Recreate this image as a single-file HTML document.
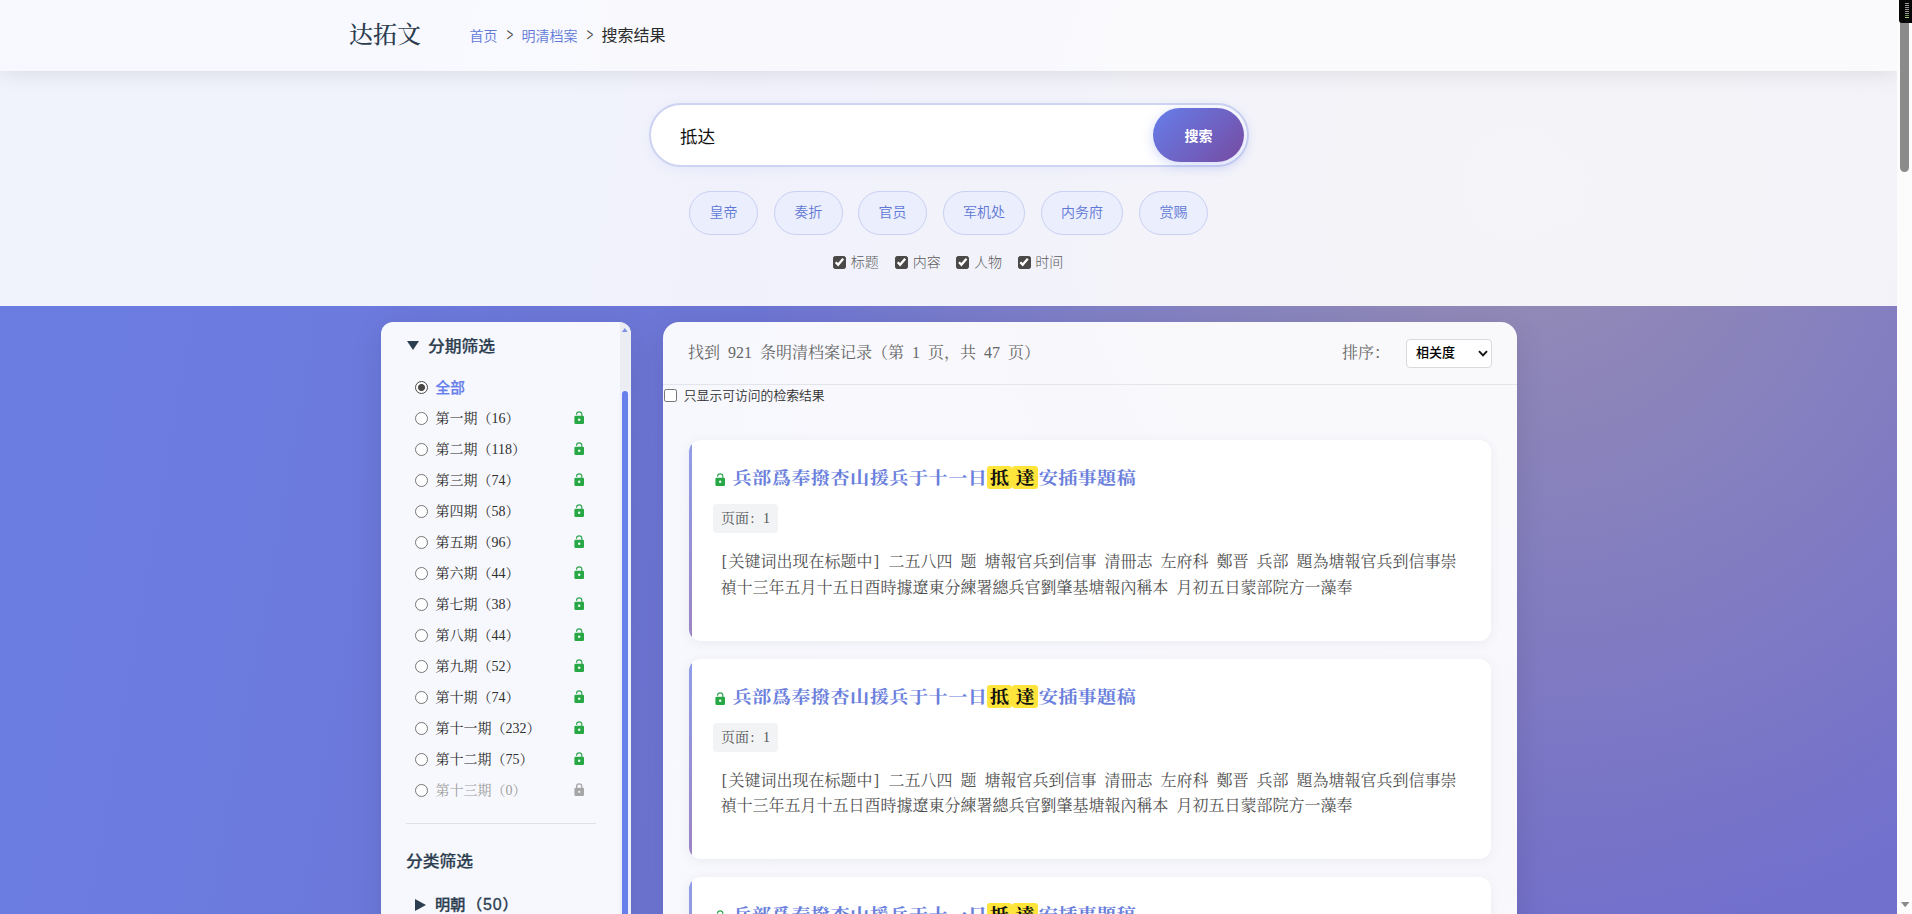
<!DOCTYPE html>
<html lang="zh-CN">
<head>
<meta charset="utf-8">
<title>搜索结果 - 明清档案 - 达拓文</title>
<style>
*{box-sizing:border-box;margin:0;padding:0}
html,body{width:1912px;height:914px;overflow:hidden;background:#fff}
body{font-family:"Liberation Sans","Noto Sans CJK SC",sans-serif;font-size:16px;color:#333;position:relative}
.serif{font-family:"Liberation Serif","Noto Serif CJK SC",serif}
#page{position:absolute;left:0;top:0;width:1897px;height:914px;overflow:hidden;
 background:
  radial-gradient(circle at 1518px 183px,rgba(240,212,122,.30) 0px,rgba(240,212,122,0) 770px),
  linear-gradient(100deg,#6b7de2 0%,#6c7add 20%,#6d76d5 36%,#716fcb 80%,#7170cd 100%)}
#lite{position:absolute;left:0;top:0;width:1897px;height:306px;background:rgba(255,255,255,.9)}

/* ---------- header ---------- */
#hdr{position:absolute;left:0;top:0;width:1897px;height:71px;background:rgba(255,255,255,.55);
 box-shadow:0 2px 20px rgba(0,0,0,.1);z-index:5}
#logo{position:absolute;left:349px;top:17px;font-family:"Liberation Serif","Noto Serif CJK SC",serif;font-size:24px;line-height:36px;color:#2c3e50;font-weight:500;white-space:nowrap}
#crumb{position:absolute;left:469.5px;top:23px;height:24px;line-height:24px;white-space:nowrap;font-size:14px;color:#666}
#crumb a{color:#5f78d8;text-decoration:none;font-weight:350}
#crumb .sep{display:inline-block;margin:0 8px;color:#555;font-family:"Noto Sans CJK SC",sans-serif;font-weight:300;font-size:15px;width:8px;text-align:center;transform:scale(.8,1.5);transform-origin:50% 56%;color:#444;position:relative;left:.5px}
#crumb .cur{font-size:16px;color:#2b2b2b;font-weight:400}

/* ---------- search ---------- */
#sbox{position:absolute;left:649px;top:103px;width:600px;height:64px;border:2px solid #cdd3f1;border-radius:32px;background:#fff;
 box-shadow:0 3px 12px rgba(102,126,234,.07)}
#sbox .q{position:absolute;left:29px;top:15.5px;font-size:17.6px;line-height:32px;color:#111;font-weight:400}
#sbtn{position:absolute;left:502px;top:3px;width:91px;height:54px;border-radius:27px;background:linear-gradient(135deg,#667eea 0%,#764ba2 100%);
 color:#fff;font-size:14px;font-weight:700;text-align:center;line-height:56px;box-shadow:0 3px 12px rgba(102,126,234,.3)}
#tags{position:absolute;left:0;top:191px;white-space:nowrap;font-size:0}
.tag{position:absolute;top:0;height:44px;line-height:40px;text-align:center;border:1px solid #c9d0f3;border-radius:22px;
 background:#ebeefc;color:#5f78d6;font-size:14px;font-weight:350}
#opts{position:absolute;left:0;top:252px;height:21px;line-height:21px;white-space:nowrap;font-size:14px;color:#5c5c5c}
#opts label{position:absolute;top:0;font-weight:300;height:21px;white-space:nowrap}
input[type=checkbox],input[type=radio]{-webkit-appearance:none;appearance:none;width:13px;height:13px;margin:0;vertical-align:top;background:#fff;border:1px solid #767676;position:relative;display:inline-block}
input[type=checkbox]{border-radius:2.2px}
input[type=checkbox]:checked{background:#4b4947;border-color:#4b4947}
input[type=checkbox]:checked::after{content:"";position:absolute;left:0;top:-.6px;width:11px;height:11px;background:#fff;clip-path:polygon(0.87px 6.70px,4.15px 10.11px,10.08px 3.14px,8.32px 1.66px,4.05px 6.69px,2.53px 5.10px)}
input[type=radio]{border-radius:50%}
input[type=radio]:checked{border:1.2px solid #4b4947;background:radial-gradient(circle at 50% 50%,#4b4947 0,#4b4947 3.1px,#fff 3.9px)}
#opts input{margin:4px 4.7px 0 0}

/* ---------- main ---------- */
#main{position:absolute;left:0;top:306px;width:1897px;height:608px;overflow:hidden}
#side{position:absolute;left:381px;top:16px;width:250px;height:640px;border-radius:12px;background:rgba(255,255,255,.95);overflow:hidden;
 box-shadow:0 8px 32px rgba(0,0,0,.1)}
#res{position:absolute;left:663px;top:16px;width:854px;height:640px;border-radius:16px;background:rgba(255,255,255,.95);overflow:hidden;
 box-shadow:0 8px 32px rgba(0,0,0,.1)}

/* ---------- sidebar ---------- */
#side .ttl{position:absolute;left:47px;top:12px;font-family:"Liberation Sans","Noto Sans CJK SC",sans-serif;font-weight:500;-webkit-text-stroke:.25px #2c3e50;font-size:16.8px;line-height:26px;color:#2c3e50;white-space:nowrap}
#side .tri{position:absolute;left:26px;top:19px;width:12px;height:9px}
.sq{display:inline-block;transform:scaleY(.92);transform-origin:50% 70%}
.row{position:absolute;left:25px;width:190px;height:31px;white-space:nowrap;font-family:"Liberation Serif","Noto Serif CJK SC",serif;font-size:14px;line-height:31px;color:#2f2f2f}
.row input{position:absolute;left:9px;top:9px}
.row .t{position:absolute;left:29.5px;top:0}
.row .lk{position:absolute;left:165.7px;top:8.4px;width:14.4px;height:14.4px}
.row.on .t{top:.5px;color:#667eea;font-weight:500;-webkit-text-stroke:.25px #667eea;font-family:"Liberation Sans","Noto Sans CJK SC",sans-serif;font-size:14.7px}
.row.off{color:#9e9e9e}
#side .hr{position:absolute;left:25px;top:501px;width:190px;height:1px;background:#dfe1e6}
#side .ttl2{position:absolute;left:25px;top:526.5px;font-family:"Liberation Sans","Noto Sans CJK SC",sans-serif;font-weight:500;-webkit-text-stroke:.25px #2c3e50;font-size:16.8px;line-height:26px;color:#2c3e50;white-space:nowrap}
#side .cat{position:absolute;left:54px;top:571px;font-family:"Liberation Sans","Noto Sans CJK SC",sans-serif;font-weight:500;-webkit-text-stroke:.3px #2c3e50;font-size:15.2px;line-height:24px;color:#2c3e50;white-space:nowrap}
#side .tri2{position:absolute;left:34px;top:577px;width:11px;height:12px}
#side .sbt{position:absolute;left:239px;top:0;width:11px;height:640px;background:#ecedf2}
#side .sbh{position:absolute;left:241.2px;top:69px;width:5.6px;height:700px;border-radius:3px;background:#677fea;box-shadow:0 0 0 2.3px #edf0fc}
#side .sba{position:absolute;left:241.3px;top:5.5px;width:5.6px;height:4px;opacity:.85}

/* ---------- results ---------- */
#res .hd{position:absolute;left:25px;top:18px;font-family:"Liberation Serif","Noto Serif CJK SC",serif;font-size:16px;line-height:26px;color:#666;white-space:nowrap;word-spacing:4px}
#res .sl{position:absolute;left:679px;top:18px;font-family:"Liberation Serif","Noto Serif CJK SC",serif;font-size:16px;line-height:26px;color:#666;white-space:nowrap}
#res .sel{position:absolute;left:743px;top:17.3px;width:86px;height:28.3px;border:1px solid #d9d9de;border-radius:4px;background:#fff;
 font-size:13px;font-weight:500;color:#000;line-height:26px;padding-left:9px;white-space:nowrap}
#res .sel svg{position:absolute;left:71px;top:9.5px;width:10px;height:7px}
#res .hl{position:absolute;left:0;top:62px;width:854px;height:1px;background:#e3e5eb}
#res .only{position:absolute;left:1.3px;top:63px;height:21px;line-height:21px;font-size:12.8px;color:#2e2e2e;white-space:nowrap;font-weight:350}
#res .only input{margin:4px 6.5px 0 0}
.card{position:absolute;left:26px;width:802px;height:200.7px;border-radius:12px;background:#fff;overflow:hidden;box-shadow:0 2px 12px rgba(60,60,120,.07)}
.card:before{content:"";position:absolute;left:0;top:0;width:3px;height:100%;background:linear-gradient(180deg,#8f9ee9 0%,#9b83c2 100%)}
.card .lk{position:absolute;left:23.8px;top:33.1px;width:14.4px;height:14.4px}
.card .tt{position:absolute;left:43.4px;top:22px;font-family:"Liberation Serif","Noto Serif CJK SC",serif;font-weight:700;font-size:19.2px;line-height:32px;color:#6b7fdc;white-space:nowrap;letter-spacing:.25px}
.card mark{display:inline-block;height:23px;line-height:23px;padding:0 3.2px;border-radius:3px;background:#ffe53b;color:#111;vertical-align:top;margin-top:4px;letter-spacing:0}
.card .tt .s{display:inline-block;transform:scaleY(.87);transform-origin:50% 75%}
.card mark .s{transform-origin:50% 83%!important}
.card mark.f{margin-left:-.8px}
.card mark.l{margin-right:1px}
.card .pg{position:absolute;left:24px;top:64px;width:65px;height:29px;border-radius:4px;background:#f1f3f5;font-family:"Liberation Serif","Noto Serif CJK SC",serif;
 font-size:14px;line-height:29px;color:#555;padding-left:8px;white-space:nowrap;word-spacing:3.5px}
.card .pg i{font-style:normal;display:inline-block;width:7px;text-align:center}
.card .ex{position:absolute;left:31.5px;top:109.2px;font-family:"Liberation Serif","Noto Serif CJK SC",serif;font-size:16px;line-height:25.6px;color:#4f4f4f;white-space:nowrap;word-spacing:4px}
.card .ex i{font-style:normal;display:inline-block;width:8px;text-align:center}

/* ---------- page scrollbar ---------- */
#vs{position:absolute;left:1897px;top:0;width:15px;height:914px;background:#fcfcfc}
#vs .th{position:absolute;left:3px;top:4px;width:9px;height:168px;border-radius:4.5px;background:#8b8b8b}
#vs .dn{position:absolute;left:3.6px;top:902.4px;width:8.4px;height:5.4px}
#vs .bx{position:absolute;left:2px;top:0;width:13px;height:23.3px;background:#070707;border-bottom-left-radius:3px}
#vs .bx i{position:absolute;left:6px;width:4px;height:1px;background:#9a9a9a}
#vs .bx i.g1{background:#6f9a5a}
#vs .bx i.g2{background:#9bd077}
</style>
</head>
<body>
<div id="page">
 <div id="lite"></div>
 <div id="hdr">
  <div id="logo">达拓文</div>
  <div id="crumb"><a>首页</a><span class="sep">&gt;</span><a>明清档案</a><span class="sep">&gt;</span><span class="cur">搜索结果</span></div>
 </div>

 <div id="sbox"><span class="q">抵达</span><div id="sbtn">搜索</div></div>
 <div id="tags"><span class="tag" style="left:689px;width:69px">皇帝</span><span class="tag" style="left:774px;width:68.5px">奏折</span><span class="tag" style="left:858px;width:69px">官员</span><span class="tag" style="left:943px;width:82px">军机处</span><span class="tag" style="left:1040.8px;width:82.2px">内务府</span><span class="tag" style="left:1138.7px;width:69.5px">赏赐</span></div>
 <div id="opts"><label style="left:833px"><input type="checkbox" checked>标题</label><label style="left:895px"><input type="checkbox" checked>内容</label><label style="left:956.3px"><input type="checkbox" checked>人物</label><label style="left:1017.6px"><input type="checkbox" checked>时间</label></div>

 <div id="main">
  <div id="side">
<svg class="tri" viewBox="0 0 12 9"><path d="M0 0H12L6 9Z" fill="#2c3e50"/></svg><div class="ttl"><span class="sq">分期筛选</span></div>
<div class="row on" style="top:50px"><input type="radio" name="p" checked><span class="t">全部</span></div>
<div class="row " style="top:81px"><input type="radio" name="p"><span class="t">第一期（16）</span><svg class="lk" viewBox="0 0 24 24"><rect x="4" y="8" width="16" height="13.6" rx="2" fill="#28a745"/><circle cx="12" cy="14.7" r="2" fill="#f0fff4"/><path d="M7.6 6.2V5.9a4.4 4.4 0 0 1 8.8 0V9" fill="none" stroke="#31a551" stroke-width="1.9"/></svg></div>
<div class="row " style="top:112px"><input type="radio" name="p"><span class="t">第二期（118）</span><svg class="lk" viewBox="0 0 24 24"><rect x="4" y="8" width="16" height="13.6" rx="2" fill="#28a745"/><circle cx="12" cy="14.7" r="2" fill="#f0fff4"/><path d="M7.6 6.2V5.9a4.4 4.4 0 0 1 8.8 0V9" fill="none" stroke="#31a551" stroke-width="1.9"/></svg></div>
<div class="row " style="top:143px"><input type="radio" name="p"><span class="t">第三期（74）</span><svg class="lk" viewBox="0 0 24 24"><rect x="4" y="8" width="16" height="13.6" rx="2" fill="#28a745"/><circle cx="12" cy="14.7" r="2" fill="#f0fff4"/><path d="M7.6 6.2V5.9a4.4 4.4 0 0 1 8.8 0V9" fill="none" stroke="#31a551" stroke-width="1.9"/></svg></div>
<div class="row " style="top:174px"><input type="radio" name="p"><span class="t">第四期（58）</span><svg class="lk" viewBox="0 0 24 24"><rect x="4" y="8" width="16" height="13.6" rx="2" fill="#28a745"/><circle cx="12" cy="14.7" r="2" fill="#f0fff4"/><path d="M7.6 6.2V5.9a4.4 4.4 0 0 1 8.8 0V9" fill="none" stroke="#31a551" stroke-width="1.9"/></svg></div>
<div class="row " style="top:205px"><input type="radio" name="p"><span class="t">第五期（96）</span><svg class="lk" viewBox="0 0 24 24"><rect x="4" y="8" width="16" height="13.6" rx="2" fill="#28a745"/><circle cx="12" cy="14.7" r="2" fill="#f0fff4"/><path d="M7.6 6.2V5.9a4.4 4.4 0 0 1 8.8 0V9" fill="none" stroke="#31a551" stroke-width="1.9"/></svg></div>
<div class="row " style="top:236px"><input type="radio" name="p"><span class="t">第六期（44）</span><svg class="lk" viewBox="0 0 24 24"><rect x="4" y="8" width="16" height="13.6" rx="2" fill="#28a745"/><circle cx="12" cy="14.7" r="2" fill="#f0fff4"/><path d="M7.6 6.2V5.9a4.4 4.4 0 0 1 8.8 0V9" fill="none" stroke="#31a551" stroke-width="1.9"/></svg></div>
<div class="row " style="top:267px"><input type="radio" name="p"><span class="t">第七期（38）</span><svg class="lk" viewBox="0 0 24 24"><rect x="4" y="8" width="16" height="13.6" rx="2" fill="#28a745"/><circle cx="12" cy="14.7" r="2" fill="#f0fff4"/><path d="M7.6 6.2V5.9a4.4 4.4 0 0 1 8.8 0V9" fill="none" stroke="#31a551" stroke-width="1.9"/></svg></div>
<div class="row " style="top:298px"><input type="radio" name="p"><span class="t">第八期（44）</span><svg class="lk" viewBox="0 0 24 24"><rect x="4" y="8" width="16" height="13.6" rx="2" fill="#28a745"/><circle cx="12" cy="14.7" r="2" fill="#f0fff4"/><path d="M7.6 6.2V5.9a4.4 4.4 0 0 1 8.8 0V9" fill="none" stroke="#31a551" stroke-width="1.9"/></svg></div>
<div class="row " style="top:329px"><input type="radio" name="p"><span class="t">第九期（52）</span><svg class="lk" viewBox="0 0 24 24"><rect x="4" y="8" width="16" height="13.6" rx="2" fill="#28a745"/><circle cx="12" cy="14.7" r="2" fill="#f0fff4"/><path d="M7.6 6.2V5.9a4.4 4.4 0 0 1 8.8 0V9" fill="none" stroke="#31a551" stroke-width="1.9"/></svg></div>
<div class="row " style="top:360px"><input type="radio" name="p"><span class="t">第十期（74）</span><svg class="lk" viewBox="0 0 24 24"><rect x="4" y="8" width="16" height="13.6" rx="2" fill="#28a745"/><circle cx="12" cy="14.7" r="2" fill="#f0fff4"/><path d="M7.6 6.2V5.9a4.4 4.4 0 0 1 8.8 0V9" fill="none" stroke="#31a551" stroke-width="1.9"/></svg></div>
<div class="row " style="top:391px"><input type="radio" name="p"><span class="t">第十一期（232）</span><svg class="lk" viewBox="0 0 24 24"><rect x="4" y="8" width="16" height="13.6" rx="2" fill="#28a745"/><circle cx="12" cy="14.7" r="2" fill="#f0fff4"/><path d="M7.6 6.2V5.9a4.4 4.4 0 0 1 8.8 0V9" fill="none" stroke="#31a551" stroke-width="1.9"/></svg></div>
<div class="row " style="top:422px"><input type="radio" name="p"><span class="t">第十二期（75）</span><svg class="lk" viewBox="0 0 24 24"><rect x="4" y="8" width="16" height="13.6" rx="2" fill="#28a745"/><circle cx="12" cy="14.7" r="2" fill="#f0fff4"/><path d="M7.6 6.2V5.9a4.4 4.4 0 0 1 8.8 0V9" fill="none" stroke="#31a551" stroke-width="1.9"/></svg></div>
<div class="row off" style="top:453px"><input type="radio" name="p"><span class="t">第十三期（0）</span><svg class="lk" viewBox="0 0 24 24"><rect x="4" y="8" width="16" height="13.6" rx="2" fill="#a6a6a6"/><circle cx="12" cy="14.7" r="1.9" fill="#f4f4f4"/><path d="M7.7 9V5.9a4.3 4.3 0 0 1 8.6 0V9" fill="none" stroke="#a6a6a6" stroke-width="2.1"/></svg></div>
<div class="hr"></div><div class="ttl2"><span class="sq">分类筛选</span></div><svg class="tri2" viewBox="0 0 11 12"><path d="M0 0L11 6L0 12Z" fill="#2c3e50"/></svg><div class="cat">明朝<span style="margin-left:1.5px">（</span><span style="letter-spacing:.8px;font-size:16px;margin-left:1px">50</span>）</div>
<div class="sbt"></div><div class="sbh"></div><svg class="sba" viewBox="0 0 7 5"><path d="M0 5L3.5 0L7 5Z" fill="#6a7fe6"/></svg>
</div>
  <div id="res">
<div class="hd">找到 921 条明清档案记录（第 1 页，共 47 页）</div>
<div class="sl">排序：</div>
<div class="sel">相关度<svg viewBox="0 0 10 7"><path d="M1 1.2L5 5.4L9 1.2" fill="none" stroke="#111" stroke-width="1.9"/></svg></div>
<div class="hl"></div>
<label class="only"><input type="checkbox">只显示可访问的检索结果</label>
<div class="card" style="top:118px"><svg class="lk" viewBox="0 0 24 24"><rect x="4" y="8" width="16" height="13.6" rx="2" fill="#28a745"/><circle cx="12" cy="14.7" r="2" fill="#f0fff4"/><path d="M7.6 6.2V5.9a4.4 4.4 0 0 1 8.8 0V9" fill="none" stroke="#31a551" stroke-width="1.9"/></svg><div class="tt"><span class="s" style="letter-spacing:.43px">兵部爲奉撥杏山援兵于十一日</span><mark class="f"><span class="s">抵</span></mark><mark class="l"><span class="s">達</span></mark><span class="s">安插事題稿</span></div>
<div class="pg">页面<i>:</i> 1</div>
<div class="ex"><i>[</i>关键词出现在标题中<i>]</i> 二五八四 题 塘報官兵到信事 清冊志 左府科 鄭晋 兵部 題為塘報官兵到信事崇<br>禎十三年五月十五日酉時據遼東分練署總兵官劉肇基塘報內稱本 月初五日蒙部院方一藻奉</div></div>
<div class="card" style="top:336.7px"><svg class="lk" viewBox="0 0 24 24"><rect x="4" y="8" width="16" height="13.6" rx="2" fill="#28a745"/><circle cx="12" cy="14.7" r="2" fill="#f0fff4"/><path d="M7.6 6.2V5.9a4.4 4.4 0 0 1 8.8 0V9" fill="none" stroke="#31a551" stroke-width="1.9"/></svg><div class="tt"><span class="s" style="letter-spacing:.43px">兵部爲奉撥杏山援兵于十一日</span><mark class="f"><span class="s">抵</span></mark><mark class="l"><span class="s">達</span></mark><span class="s">安插事題稿</span></div>
<div class="pg">页面<i>:</i> 1</div>
<div class="ex"><i>[</i>关键词出现在标题中<i>]</i> 二五八四 题 塘報官兵到信事 清冊志 左府科 鄭晋 兵部 題為塘報官兵到信事崇<br>禎十三年五月十五日酉時據遼東分練署總兵官劉肇基塘報內稱本 月初五日蒙部院方一藻奉</div></div>
<div class="card" style="top:555.2px"><svg class="lk" viewBox="0 0 24 24"><rect x="4" y="8" width="16" height="13.6" rx="2" fill="#28a745"/><circle cx="12" cy="14.7" r="2" fill="#f0fff4"/><path d="M7.6 6.2V5.9a4.4 4.4 0 0 1 8.8 0V9" fill="none" stroke="#31a551" stroke-width="1.9"/></svg><div class="tt"><span class="s" style="letter-spacing:.43px">兵部爲奉撥杏山援兵于十一日</span><mark class="f"><span class="s">抵</span></mark><mark class="l"><span class="s">達</span></mark><span class="s">安插事題稿</span></div>
<div class="pg">页面<i>:</i> 1</div>
<div class="ex"><i>[</i>关键词出现在标题中<i>]</i> 二五八四 题 塘報官兵到信事 清冊志 左府科 鄭晋 兵部 題為塘報官兵到信事崇<br>禎十三年五月十五日酉時據遼東分練署總兵官劉肇基塘報內稱本 月初五日蒙部院方一藻奉</div></div>

</div>
 </div>
</div>
<div id="vs"><div class="th"></div><svg class="dn" viewBox="0 0 8 5"><path d="M0 0H8L4 5Z" fill="#8a8a8a"/></svg><div class="bx"><i style="top:3px"></i><i style="top:5px"></i><i style="top:7px"></i><i style="top:9px"></i><i style="top:11px"></i><i style="top:13px"></i><i class="g1" style="top:15px"></i><i class="g2" style="top:17px"></i></div></div>
</body>
</html>
